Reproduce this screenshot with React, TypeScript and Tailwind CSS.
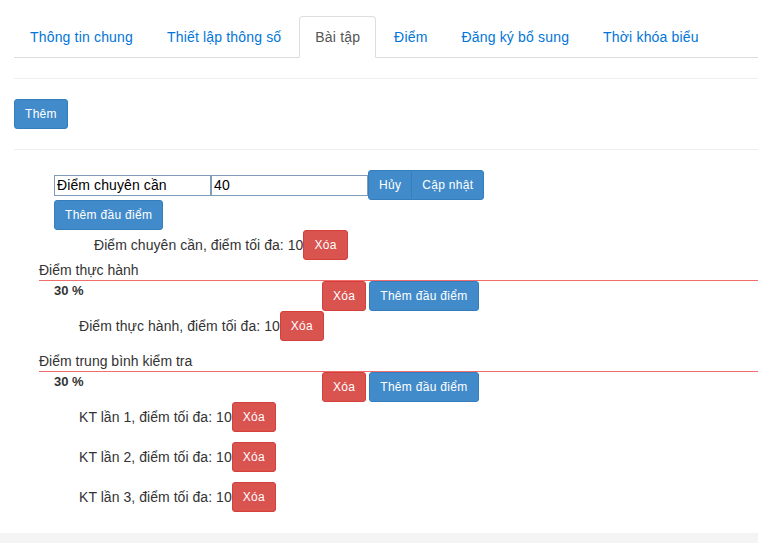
import React from "react";

const tabs = ["Thông tin chung", "Thiết lập thông số", "Bài tập", "Điểm", "Đăng ký bổ sung", "Thời khóa biểu"];

const btnBase =
  "inline-flex items-center justify-center h-[30px] text-[12px] leading-[18px] tracking-[0.3px] text-white border rounded-[3px]";
const btnBlue = btnBase + " px-[10px] bg-[#428bca] border-[#357ebd]";
const btnRed = btnBase + " px-[10px] bg-[#d9534f] border-[#d43f3a]";

function Item({ label }: { label: string }) {
  return (
    <div className="flex items-center h-[30px] pl-[65px]">
      <span className="text-[14px] leading-[18px] tracking-[0.05px]">{label}</span>
      <button className={btnRed}>Xóa</button>
    </div>
  );
}

function GroupHead({ title }: { title: string }) {
  return (
    <>
      <div className="ml-[25px] border-b border-[#f36c6c] text-[14px] leading-[20px]">{title}</div>
      <div className="flex items-start h-[30px] pl-[40px]">
        <b className="w-[268px] text-[13px] leading-[20px] font-bold">30 %</b>
        <button className={btnRed}>Xóa</button>
        <button className={btnBlue + " ml-[3px]"}>Thêm đầu điểm</button>
      </div>
    </>
  );
}

export default function App() {
  return (
    <div className="min-h-[543px] bg-[#f4f4f4] text-[#333] font-['Liberation_Sans',Arial,sans-serif]">
      <div className="bg-white pl-[14px] pb-[21px]">
        <ul className="flex pt-[16px] border-b border-[#ddd]">
          {tabs.map((t) => {
            const active = t === "Bài tập";
            return (
              <li key={t} className="-mb-px mr-[2px]">
                <a
                  className={
                    "block px-[15px] py-[10px] text-[14px] leading-[20px] tracking-[0.17px] border rounded-t-[4px] " +
                    (active
                      ? "border-[#ddd] border-b-white bg-white text-[#555]"
                      : "border-transparent text-[#0275d8]")
                  }
                >
                  {t}
                </a>
              </li>
            );
          })}
        </ul>
        <div className="mt-[20px] border-t border-[#eee]" />
        <div className="mt-[20px]">
          <button className={btnBlue}>Thêm</button>
        </div>
        <div className="mt-[20px] border-t border-[#eee]" />

        <div className="mt-[20px] pl-[40px] flex items-center h-[30px]">
          <input
            className="w-[157px] h-[21px] border border-[#7f9db9] px-[2px] text-[14px] tracking-[0.1px] text-black outline-none"
            defaultValue="Điểm chuyên cần"
          />
          <input
            className="w-[157px] h-[21px] border border-[#7f9db9] px-[2px] text-[14px] tracking-[0.1px] text-black outline-none"
            defaultValue="40"
          />
          <div className="flex">
            <button className={btnBlue + " rounded-r-none"}>Hủy</button>
            <button className={btnBlue + " rounded-l-none -ml-px tracking-[0.1px]"}>Cập nhật</button>
          </div>
        </div>
        <div className="pl-[40px]">
          <button className={btnBlue}>Thêm đầu điểm</button>
        </div>
        <div className="flex items-center h-[30px] pl-[80px]">
          <span className="text-[14px] leading-[18px] tracking-[0.05px]">Điểm chuyên cần, điểm tối đa: 10</span>
          <button className={btnRed}>Xóa</button>
        </div>

        <GroupHead title="Điểm thực hành" />
        <Item label="Điểm thực hành, điểm tối đa: 10" />

        <div className="mt-[10px]" />
        <GroupHead title="Điểm trung bình kiểm tra" />
        <div className="flex flex-col gap-[10px]">
          <Item label="KT lần 1, điểm tối đa: 10" />
          <Item label="KT lần 2, điểm tối đa: 10" />
          <Item label="KT lần 3, điểm tối đa: 10" />
        </div>
      </div>
    </div>
  );
}
